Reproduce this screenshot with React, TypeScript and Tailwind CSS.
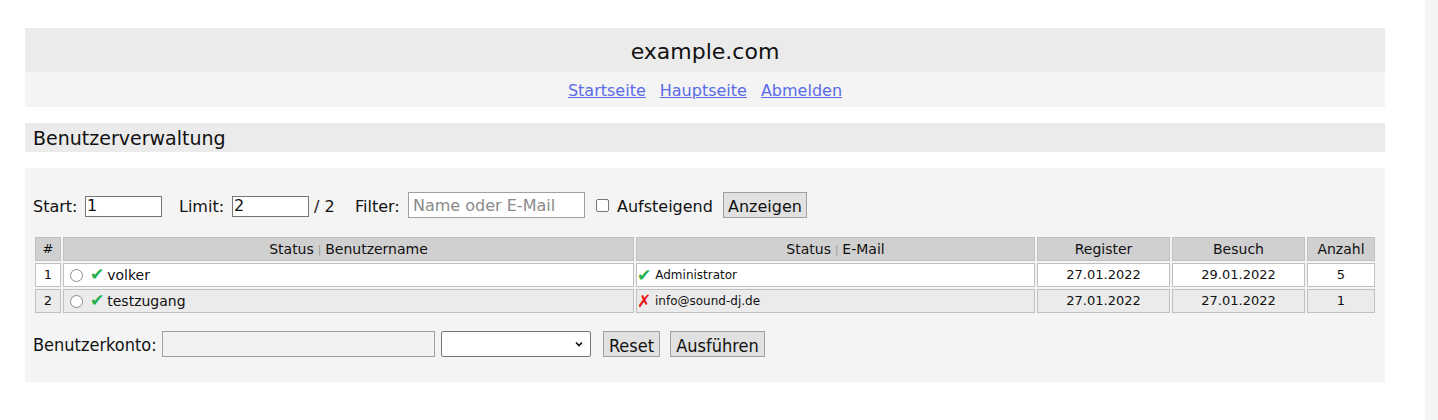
const rows = [
  { nr: 1, name: 'volker', mailOk: true, mail: 'Administrator', register: '27.01.2022', besuch: '29.01.2022', anzahl: 5 },
  { nr: 2, name: 'testzugang', mailOk: false, mail: 'info@sound-dj.de', register: '27.01.2022', besuch: '27.01.2022', anzahl: 1 },
]

function Sep() {
  return <span className="mx-[4px] text-[10px] text-[#999] align-[1px]">|</span>
}

function Check() {
  return <span className="text-[17px] leading-none text-[#22b04b]">✔</span>
}

export default function App() {
  return (
    <div className="flex min-h-[420px] bg-white font-['DejaVu_Sans',sans-serif] text-[#111]">
      <div className="flex-1 pt-[28px] pl-[25px]">
        <div className="w-[1360px]">
          {/* Header */}
          <div className="h-[44px] bg-[#ebebeb] flex items-center justify-center text-[22px] pt-[2px]">
            example.com
          </div>
          <div className="h-[35px] bg-[#f4f4f4] flex items-center justify-center gap-[14px] text-[16px] pt-[3px]">
            <a href="#" className="text-[#5a6be8] underline">Startseite</a>
            <a href="#" className="text-[#5a6be8] underline">Hauptseite</a>
            <a href="#" className="text-[#5a6be8] underline">Abmelden</a>
          </div>

          {/* Section heading */}
          <div className="mt-[16px] h-[29px] bg-[#ebebeb] flex items-center px-[8px] text-[19px] pt-[1px]">
            Benutzerverwaltung
          </div>

          {/* Panel */}
          <div className="mt-[16px] bg-[#f4f4f4] px-[8px] pt-[24px] pb-[25px]">
            <div className="flex items-center h-[26px] text-[16px]">
              <span className="w-[52px] pt-[3px]">Start:</span>
              <input
                defaultValue="1"
                className="w-[77px] h-[21px] mt-[2px] border border-[#767676] bg-white px-[1px] text-[16px] outline-none"
              />
              <span className="ml-[17px] w-[53px] pt-[3px]">Limit:</span>
              <input
                defaultValue="2"
                className="w-[77px] h-[21px] mt-[2px] border border-[#767676] bg-white px-[1px] text-[16px] outline-none"
              />
              <span className="ml-[5px] w-[41px] pt-[3px]">/ 2</span>
              <span className="w-[53px] pt-[3px]">Filter:</span>
              <input
                placeholder="Name oder E-Mail"
                className="w-[177px] h-[26px] border border-[#a0a0a0] bg-white px-[4px] text-[16px] placeholder:text-[#8a8a8a] outline-none"
              />
              <span className="ml-[11px] w-[13px] h-[13px] border border-[#767676] rounded-[2px] bg-white" />
              <span className="ml-[8px] w-[106px] pt-[3px]">Aufsteigend</span>
              <button className="w-[84px] h-[26px] bg-[#e1e1e1] border border-[#a0a0a0] text-[16px] pt-[2px]">
                Anzeigen
              </button>
            </div>

            <table className="mt-[17px] w-[1344px] table-fixed border-separate border-spacing-[2px] text-[14px]">
              <colgroup>
                <col className="w-[26px]" />
                <col className="w-[571px]" />
                <col />
                <col className="w-[133px]" />
                <col className="w-[133px]" />
                <col className="w-[68px]" />
              </colgroup>
              <thead>
                <tr className="h-[24px]">
                  <th className="bg-[#d0d0d0] border border-[#c0c0c0] font-normal text-[13px] p-0">#</th>
                  <th className="bg-[#d0d0d0] border border-[#c0c0c0] font-normal p-0">
                    Status<Sep />Benutzername
                  </th>
                  <th className="bg-[#d0d0d0] border border-[#c0c0c0] font-normal p-0">
                    Status<Sep />E-Mail
                  </th>
                  <th className="bg-[#d0d0d0] border border-[#c0c0c0] font-normal p-0">Register</th>
                  <th className="bg-[#d0d0d0] border border-[#c0c0c0] font-normal p-0">Besuch</th>
                  <th className="bg-[#d0d0d0] border border-[#c0c0c0] font-normal p-0">Anzahl</th>
                </tr>
              </thead>
              <tbody>
                {rows.map((r) => {
                  const bg = r.nr % 2 === 1 ? 'bg-white' : 'bg-[#ebebeb]'
                  return (
                    <tr key={r.nr} className="h-[24px]">
                      <td className={`${bg} border border-[#c0c0c0] text-center text-[13px] p-0`}>{r.nr}</td>
                      <td className={`${bg} border border-[#c0c0c0] p-0 pl-[6px]`}>
                        <div className="flex items-center">
                          <span className="w-[13px] h-[13px] rounded-full border border-[#8a8a8a] bg-white" />
                          <span className="ml-[7px]"><Check /></span>
                          <span className="ml-[3px]">{r.name}</span>
                        </div>
                      </td>
                      <td className={`${bg} border border-[#c0c0c0] p-0`}>
                        <div className="flex items-center">
                          {r.mailOk ? (
                            <Check />
                          ) : (
                            <span className="text-[17px] leading-none font-bold text-[#ee1111] w-[14px] text-center">✗</span>
                          )}
                          <span className="ml-[4px] text-[12px]">{r.mail}</span>
                        </div>
                      </td>
                      <td className={`${bg} border border-[#c0c0c0] text-center text-[13px] p-0`}>{r.register}</td>
                      <td className={`${bg} border border-[#c0c0c0] text-center text-[13px] p-0`}>{r.besuch}</td>
                      <td className={`${bg} border border-[#c0c0c0] text-center text-[13px] p-0`}>{r.anzahl}</td>
                    </tr>
                  )
                })}
              </tbody>
            </table>

            <div className="mt-[16px] flex items-center h-[26px] text-[18px] font-['DejaVu_Sans_Condensed','DejaVu_Sans',sans-serif]">
              <span className="w-[129px]">Benutzerkonto:</span>
              <input
                disabled
                className="w-[273px] h-[26px] border border-[#a0a0a0] bg-[#f2f2f2]"
              />
              <div className="ml-[6px] w-[150px] h-[26px] border border-[#767676] rounded-[2px] bg-white flex items-center justify-end pr-[7px]">
                <svg width="8" height="6" viewBox="0 0 8 6">
                  <path d="M1 1.5 L4 4.5 L7 1.5" fill="none" stroke="#111" strokeWidth="1.6" />
                </svg>
              </div>
              <button className="ml-[12px] w-[57px] h-[26px] bg-[#e1e1e1] border border-[#a0a0a0]">
                Reset
              </button>
              <button className="ml-[10px] w-[95px] h-[26px] bg-[#e1e1e1] border border-[#a0a0a0]">
                Ausführen
              </button>
            </div>
          </div>
        </div>
      </div>
      <div className="w-[13px] bg-[#f4f4f4]" />
    </div>
  )
}
